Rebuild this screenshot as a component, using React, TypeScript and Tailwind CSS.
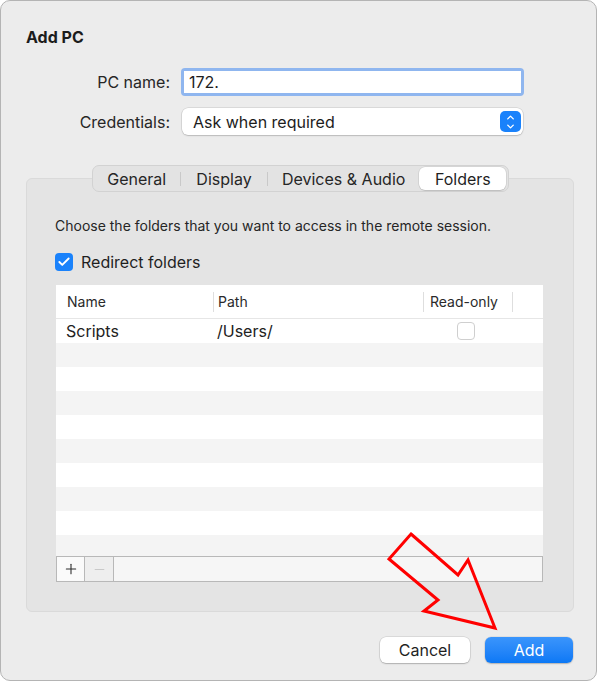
import { Check, Plus, Minus, ChevronUp, ChevronDown } from 'lucide-react'

const tabs = ['General', 'Display', 'Devices & Audio', 'Folders']

function TabBar({ active }: { active: string }) {
  return (
    <div className="relative z-10 mx-auto -mt-[14px] flex h-[27px] w-[417px] items-center rounded-[7px] border border-[#d2d2d2] bg-[#e3e3e3] p-[1px]">
      {tabs.map((t, i) => {
        const selected = t === active
        const nextSelected = tabs[i + 1] === active
        const last = i === tabs.length - 1
        return (
          <div key={t} className="flex h-full items-center" style={{ flex: t === 'Devices & Audio' ? '0 0 151px' : '1 1 0' }}>
            <div
              className={
                selected
                  ? 'flex h-full flex-1 items-center justify-center rounded-[6px] bg-white text-[16px] text-[#1f1f1f] shadow-[0_0_0_0.5px_rgba(0,0,0,0.12),0_1px_1px_rgba(0,0,0,0.1)]'
                  : 'flex h-full flex-1 items-center justify-center text-[16px] text-[#262626]'
              }
            >
              {t}
            </div>
            {!last && !selected && !nextSelected && <div className="h-[14px] w-px bg-[#c9c9c9]" />}
          </div>
        )
      })}
    </div>
  )
}

function FolderTable() {
  const rows = Array.from({ length: 10 })
  return (
    <div className="w-[487px] bg-white">
      <div className="flex h-[34px] items-center border-b border-[#e6e6e6] text-[14px] text-[#2a2a2a]">
        <div className="flex h-full w-[157px] items-center pl-[11px]">Name</div>
        <div className="h-[20px] w-px bg-[#dedede]" />
        <div className="flex h-full w-[209px] items-center pl-[4px]">Path</div>
        <div className="h-[20px] w-px bg-[#dedede]" />
        <div className="flex h-full w-[88px] items-center pl-[6px]">Read-only</div>
        <div className="h-[20px] w-px bg-[#dedede]" />
      </div>
      <div className="h-[237px] overflow-hidden">
        {rows.map((_, i) => (
          <div key={i} className={i % 2 === 0 ? 'flex h-[24px] items-center bg-white' : 'flex h-[24px] items-center bg-[#f4f4f4]'}>
            {i === 0 && (
              <>
                <div className="w-[158px] pl-[10px] text-[16px] text-[#222]">Scripts</div>
                <div className="w-[210px] pl-[3px] text-[16px] text-[#222]">/Users/</div>
                <div className="flex w-[88px] justify-center pr-[4px]">
                  <div className="h-[18px] w-[18px] rounded-[4px] border border-[#cfcfcf] bg-white" />
                </div>
              </>
            )}
          </div>
        ))}
      </div>
      <div className="flex h-[26px] border border-[#b8b8b8] bg-[#f6f6f6]">
        <div className="flex w-[28px] items-center justify-center border-r border-[#b8b8b8] bg-[#fafafa]">
          <Plus size={16} strokeWidth={1.6} className="text-[#2a2a2a]" />
        </div>
        <div className="flex w-[29px] items-center justify-center border-r border-[#b8b8b8] bg-[#eeeeee]">
          <Minus size={15} strokeWidth={1.4} className="text-[#c4c4c4]" />
        </div>
        <div className="flex-1" />
      </div>
    </div>
  )
}

export default function App() {
  return (
    <div className="h-[682px] w-[600px] bg-white" style={{ fontFamily: 'Inter, "Liberation Sans", sans-serif' }}>
      <div className="relative h-[681px] w-[597px] rounded-[10px] border border-[#b4b4b4] bg-[#ececec] px-[25px] pt-[26px]">
        <h1 className="text-[16px] leading-[20px] font-bold text-[#1c1c1c]">Add PC</h1>

        <div className="mt-[21px] flex flex-col gap-[12px]">
          <div className="flex items-center">
            <label className="w-[145px] pr-[1px] text-right text-[16px] text-[#262626]">PC name:</label>
            <div className="ml-[10px] h-[28px] w-[343px] rounded-[4px] bg-[#8fb6ef] p-[3px]">
              <div className="flex h-full items-center bg-white pl-[5px] text-[16px] text-[#1c1c1c]">172.</div>
            </div>
          </div>
          <div className="flex items-center">
            <label className="w-[145px] pr-[1px] text-right text-[16px] text-[#262626]">Credentials:</label>
            <div className="ml-[11px] flex h-[27px] w-[341px] items-center justify-between rounded-[6px] bg-white pl-[11px] pr-[2px] text-[16px] text-[#1c1c1c] shadow-[0_0_0_0.5px_rgba(0,0,0,0.15),0_1px_1.5px_rgba(0,0,0,0.15)]">
              <span>Ask when required</span>
              <div className="flex h-[21px] w-[21px] flex-col items-center justify-center rounded-[5px] bg-[#1a82fb] text-white">
                <ChevronUp size={11} strokeWidth={3} className="-mb-[1px]" />
                <ChevronDown size={11} strokeWidth={3} className="-mt-[1px]" />
              </div>
            </div>
          </div>
        </div>

        <div className="mt-[43px] h-[434px] w-[548px] rounded-[6px] border border-[#dadada] bg-[#e4e4e4]">
          <TabBar active="Folders" />
          <div className="px-[28px] pt-[26px]">
            <p className="text-[14px] leading-[16px] text-[#262626]">Choose the folders that you want to access in the remote session.</p>
            <div className="mt-[16px] flex items-center gap-[8px]">
              <div className="flex h-[18px] w-[18px] items-center justify-center rounded-[4px] bg-[#1a82fb]">
                <Check size={14} strokeWidth={3.2} className="text-white" />
              </div>
              <span className="text-[16px] text-[#1f1f1f]">Redirect folders</span>
            </div>
            <div className="mt-[11px] ml-[1px]">
              <FolderTable />
            </div>
          </div>
        </div>

        <div className="-mr-[2px] mt-[25px] flex justify-end gap-[15px]">
          <button className="h-[26px] w-[90px] rounded-[6px] bg-white text-[16px] text-[#1f1f1f] shadow-[0_0_0_0.5px_rgba(0,0,0,0.15),0_1px_1.5px_rgba(0,0,0,0.2)]">Cancel</button>
          <button className="h-[26px] w-[88px] rounded-[6px] bg-gradient-to-b from-[#3a95fc] to-[#0a78f5] text-[16px] text-white shadow-[0_0_0_0.5px_rgba(0,0,0,0.1),0_1px_1.5px_rgba(0,0,0,0.2)]">Add</button>
        </div>

        <svg className="pointer-events-none absolute left-0 top-0" width="600" height="682" viewBox="0 0 600 682">
          <polygon
            points="410,533 457,574 467,559 494,627 423,610 437,599 388,558"
            fill="none"
            stroke="#ff0000"
            strokeWidth="3"
            strokeLinejoin="miter"
          />
        </svg>
      </div>
    </div>
  )
}
